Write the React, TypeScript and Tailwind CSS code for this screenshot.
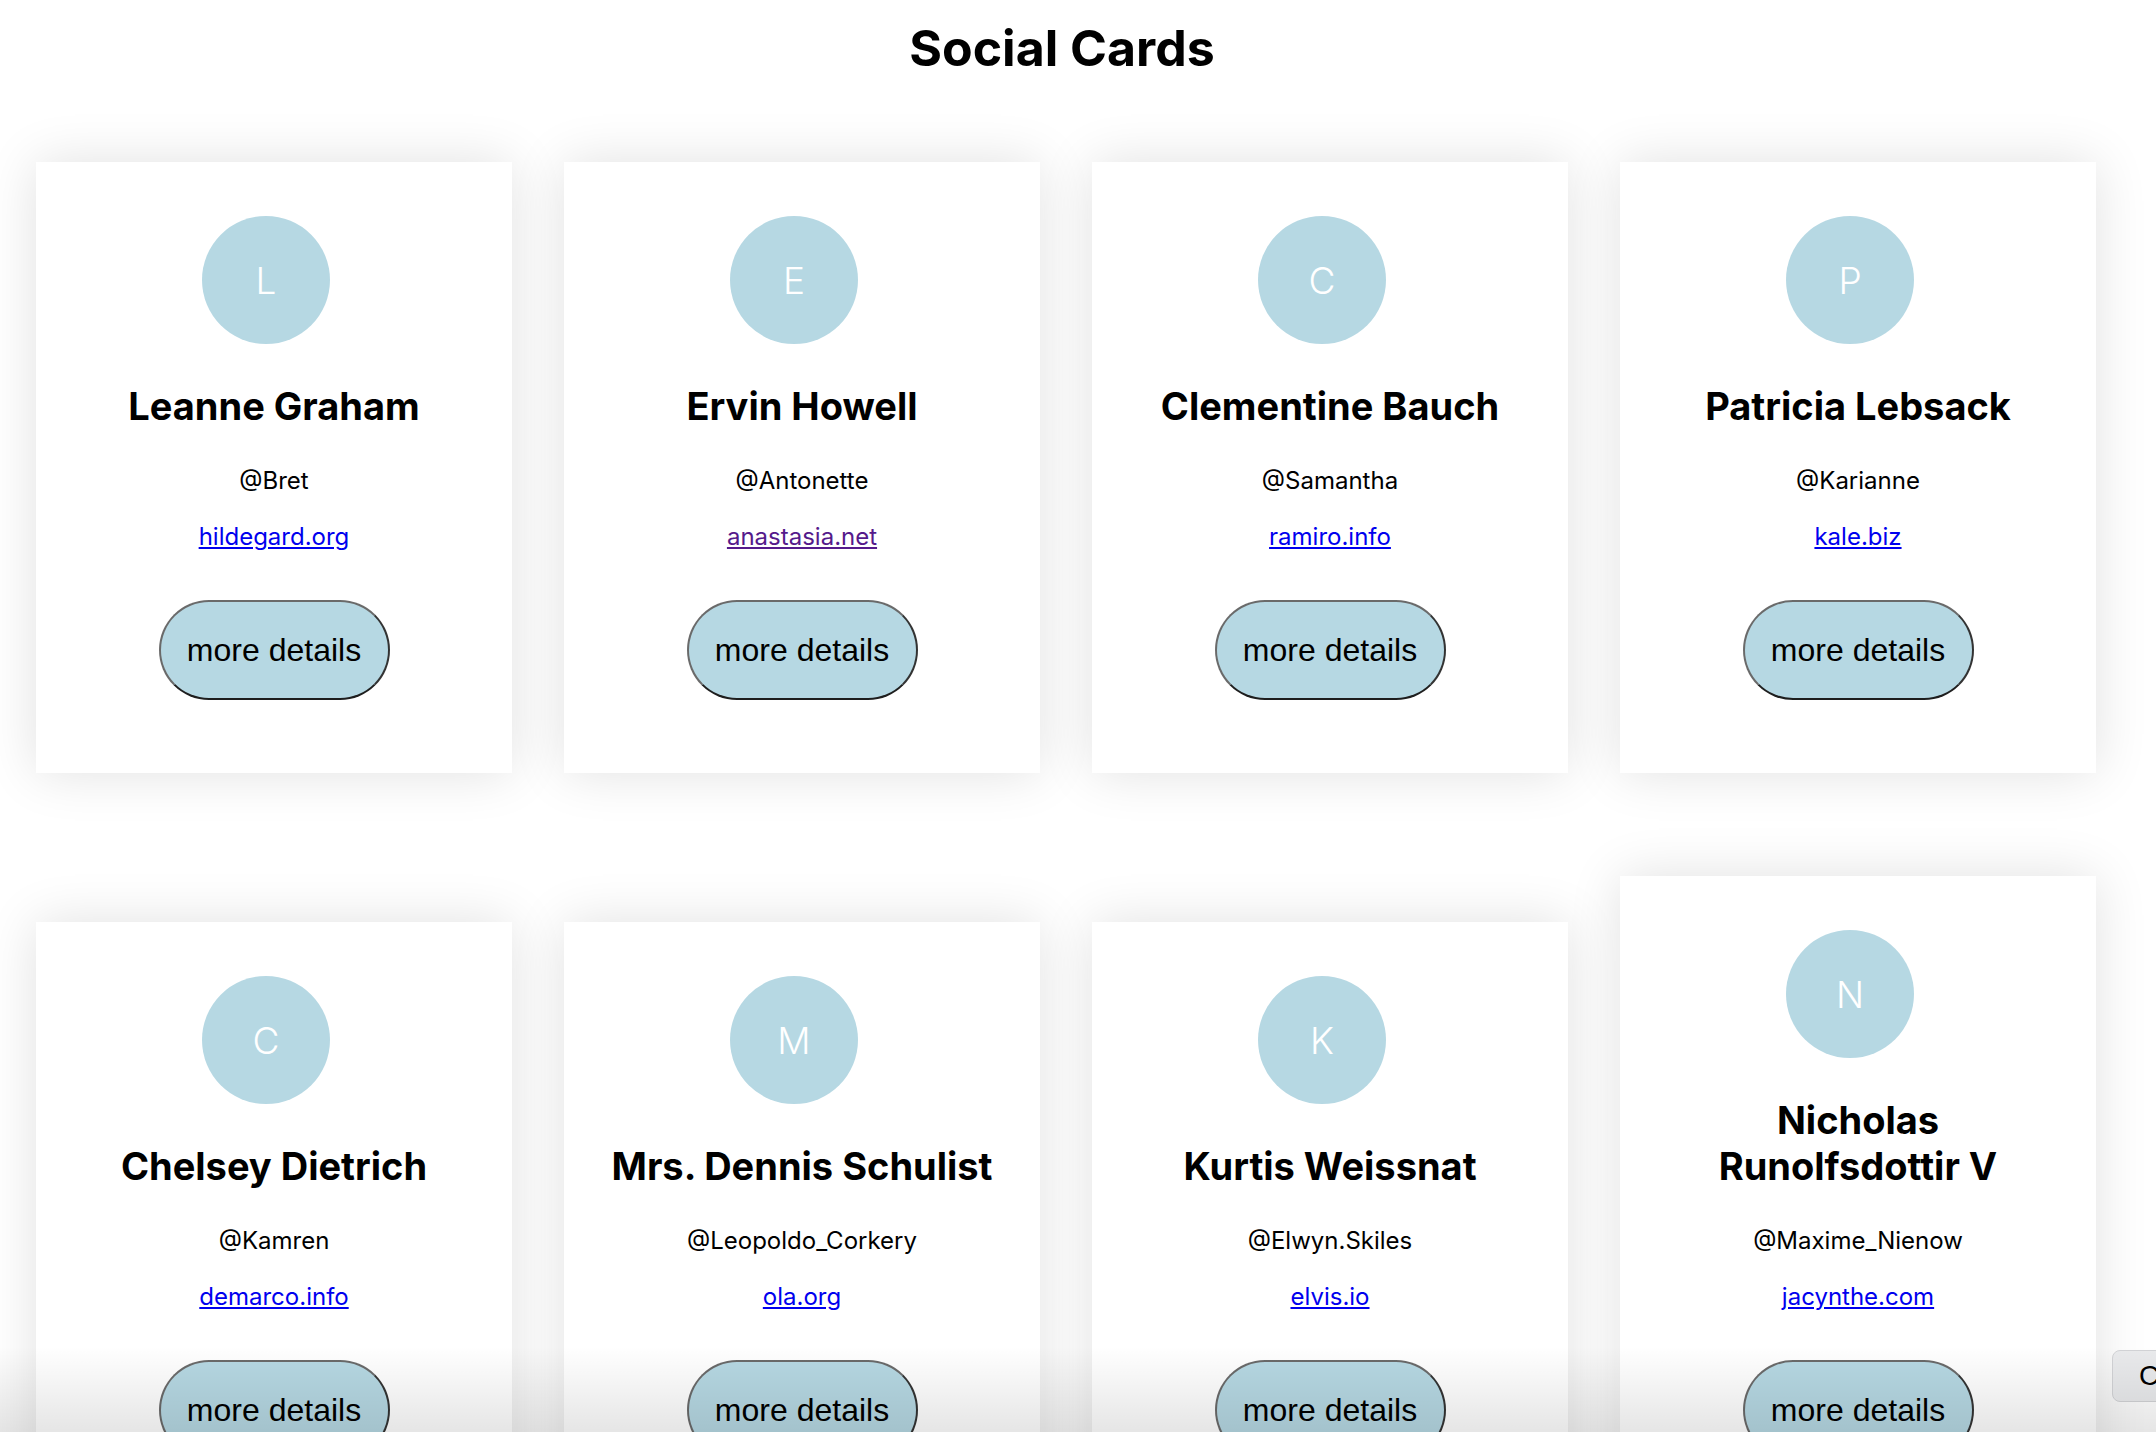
import React from "react";

type User = { name: string; username: string; website: string; visited?: boolean };

const users: User[] = [
  { name: "Leanne Graham", username: "Bret", website: "hildegard.org" },
  { name: "Ervin Howell", username: "Antonette", website: "anastasia.net", visited: true },
  { name: "Clementine Bauch", username: "Samantha", website: "ramiro.info" },
  { name: "Patricia Lebsack", username: "Karianne", website: "kale.biz" },
  { name: "Chelsey Dietrich", username: "Kamren", website: "demarco.info" },
  { name: "Mrs. Dennis Schulist", username: "Leopoldo_Corkery", website: "ola.org" },
  { name: "Kurtis Weissnat", username: "Elwyn.Skiles", website: "elvis.io" },
  { name: "Nicholas Runolfsdottir V", username: "Maxime_Nienow", website: "jacynthe.com" },
];

function Card({ u }: { u: User }) {
  return (
    <div className="w-[476px] bg-white shadow-[0_0_50px_rgba(0,0,0,0.12)] pt-[54px] pb-[73px] px-[40px] flex flex-col items-center text-center">
      <div className="w-[128px] h-[128px] rounded-full bg-[#b6d8e3] mr-4 flex items-center justify-center text-white text-[37px] font-light leading-none">
        {u.name.charAt(0)}
      </div>
      <h2 className="mt-[39px] text-[38px] leading-[46px] font-bold text-black">{u.name}</h2>
      <p className="mt-[37px] text-[24px] leading-[29px] text-black">@{u.username}</p>
      <a
        href="#"
        className={
          "mt-[27px] text-[24px] leading-[29px] underline " +
          (u.visited ? "text-[#551a8b]" : "text-[#0000ee]")
        }
      >
        {u.website}
      </a>
      <button
        className="mt-[49px] w-[231px] h-[100px] rounded-full bg-[#b6d8e3] border-2 border-[#6a6a6a] border-b-[#1e1e1e] border-r-[#333333] text-[32px] text-black"
        style={{ fontFamily: '"Liberation Sans", Arial, sans-serif' }}
      >
        more details
      </button>
    </div>
  );
}

export default function App() {
  return (
    <div
      className="relative h-[1432px] w-[2156px] overflow-hidden bg-white"
      style={{ fontFamily: 'Inter, "Noto Sans", sans-serif' }}
    >
      <div className="w-[2124px]">
        <h1 className="pt-[18px] text-center text-[50px] leading-[60px] font-bold text-black">Social Cards</h1>
      </div>
      <div className="mt-[84px] pl-[36px] flex flex-wrap items-end gap-x-[52px] gap-y-[103px]">
        {users.map((u) => (
          <Card key={u.username} u={u} />
        ))}
      </div>
      <div
        className="absolute left-[2112px] top-[1350px] w-[120px] h-[52px] rounded-[8px] border border-[#d2d3d6] bg-[#e9eaec] pl-[26px] flex items-center text-[28px] text-black"
        style={{ fontFamily: '"Liberation Sans", Arial, sans-serif' }}
      >
        C
      </div>
      <div className="pointer-events-none absolute left-0 bottom-0 w-full h-[86px] bg-gradient-to-b from-transparent to-black/[0.1]" />
    </div>
  );
}
